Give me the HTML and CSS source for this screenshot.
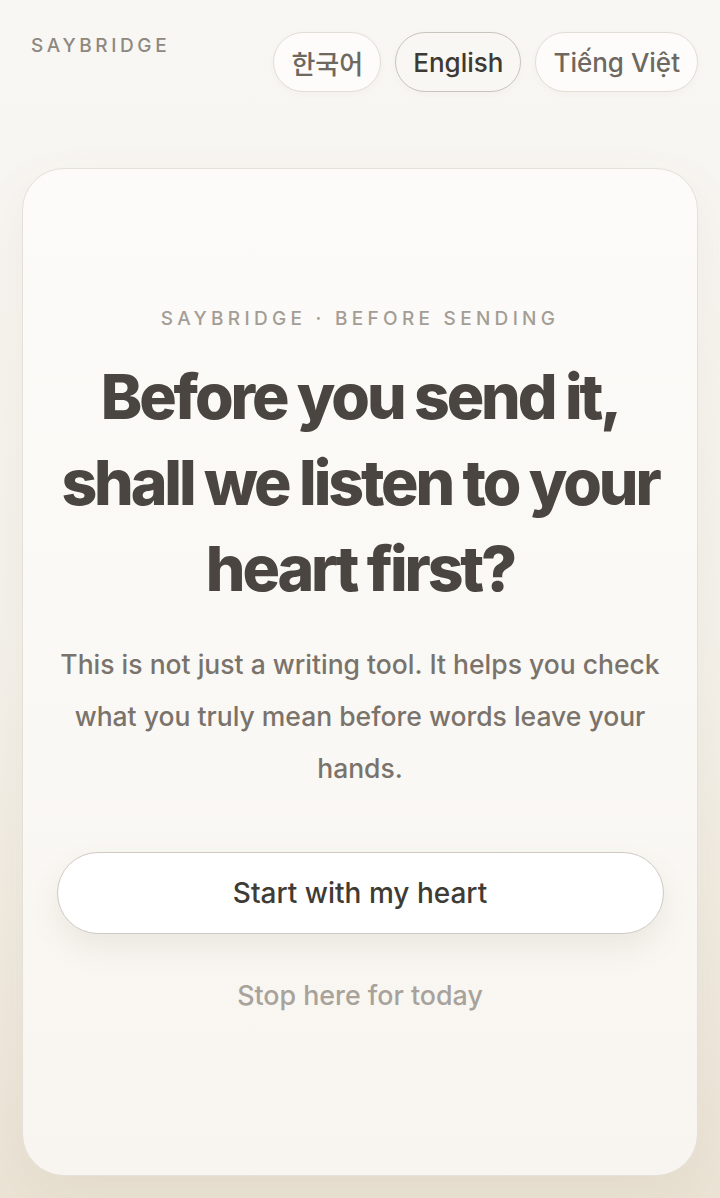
FILE: index.html
```html
<!DOCTYPE html>
<html lang="en">
<head>
<meta charset="utf-8">
<title>SayBridge</title>
<link rel="stylesheet" href="styles.css">
</head>
<body>
<div class="page">
  <header class="top">
    <div class="logo">SAYBRIDGE</div>
    <nav class="langs">
      <button class="pill" lang="ko">한국어</button>
      <button class="pill active">English</button>
      <button class="pill" lang="vi">Tiếng Việt</button>
    </nav>
  </header>
  <main class="card">
    <div class="eyebrow">SAYBRIDGE · BEFORE SENDING</div>
    <h1 class="title">Before you send it, shall we listen to your heart first?</h1>
    <p class="lead">This is not just a writing tool. It helps you check what you truly mean before words leave your hands.</p>
    <button class="primary">Start with my heart</button>
    <button class="ghost">Stop here for today</button>
  </main>
</div>
</body>
</html>
```

FILE: styles.css
```css
* { box-sizing: border-box; }
html, body { margin: 0; padding: 0; }
body {
  font-family: Inter, "Noto Sans", "Noto Sans CJK KR", sans-serif;
  background: linear-gradient(180deg, #f8f7f4 0%, #f4f1ea 55%, #ebe3d5 100%);
  min-height: 1198px;
  color: #4a4540;
}
.page {
  display: flex;
  flex-direction: column;
  padding: 32px 22px 24px 22px;
  min-height: 1198px;
}
.top {
  display: flex;
  justify-content: space-between;
  align-items: flex-start;
}
.logo {
  margin: 2px 0 0 9px;
  font-size: 19px;
  line-height: 24px;
  letter-spacing: 3.6px;
  font-weight: 500;
  color: #8e8880;
}
.langs {
  display: flex;
  gap: 14px;
}
.pill {
  font-family: Inter, "Noto Sans CJK KR", sans-serif;
  height: 60px;
  padding: 0 17px;
  border-radius: 30px;
  border: 1.5px solid #e2ddd6;
  background: #fdfcfa;
  font-size: 26px;
  font-weight: 500;
  color: #6e6860;
  box-shadow: 0 2px 6px rgba(120, 100, 70, 0.04);
}
.pill.active {
  border-color: #c9c4bc;
  color: #3d3933;
  background: #f8f7f4;
}
.card {
  margin-top: 76px;
  height: 1008px;
  border-radius: 42px;
  border: 1.5px solid #e4e0d9;
  background: linear-gradient(180deg, #fcfbf9 0%, #faf8f4 60%, #f8f5f0 100%);
  box-shadow: 0 20px 50px rgba(140, 115, 80, 0.08);
  display: flex;
  flex-direction: column;
  align-items: center;
  padding: 138px 30px 0 30px;
  text-align: center;
}
.eyebrow {
  font-size: 19px;
  line-height: 24px;
  letter-spacing: 4.3px;
  font-weight: 500;
  color: #a39d95;
}
.title {
  margin: 22px 0 0 0;
  font-size: 62.5px;
  line-height: 86px;
  font-weight: 800;
  letter-spacing: -0.05em;
  color: #4a4540;
}
.lead {
  margin: 27px 0 0 0;
  font-size: 26.5px;
  line-height: 52px;
  font-weight: 500;
  color: #7a736b;
}
.primary {
  margin-top: 58px;
  width: 607px;
  height: 82px;
  border-radius: 41px;
  border: 1.5px solid #cfcac3;
  background: #ffffff;
  font-family: Inter, sans-serif;
  font-size: 28px;
  font-weight: 500;
  color: #3f3b35;
  box-shadow: 0 14px 30px rgba(120, 100, 70, 0.10);
}
.ghost {
  margin-top: 43px;
  border: 0;
  background: none;
  font-family: Inter, sans-serif;
  font-size: 26.8px;
  line-height: 36px;
  font-weight: 500;
  color: #a8a29b;
  padding: 0;
}
```
